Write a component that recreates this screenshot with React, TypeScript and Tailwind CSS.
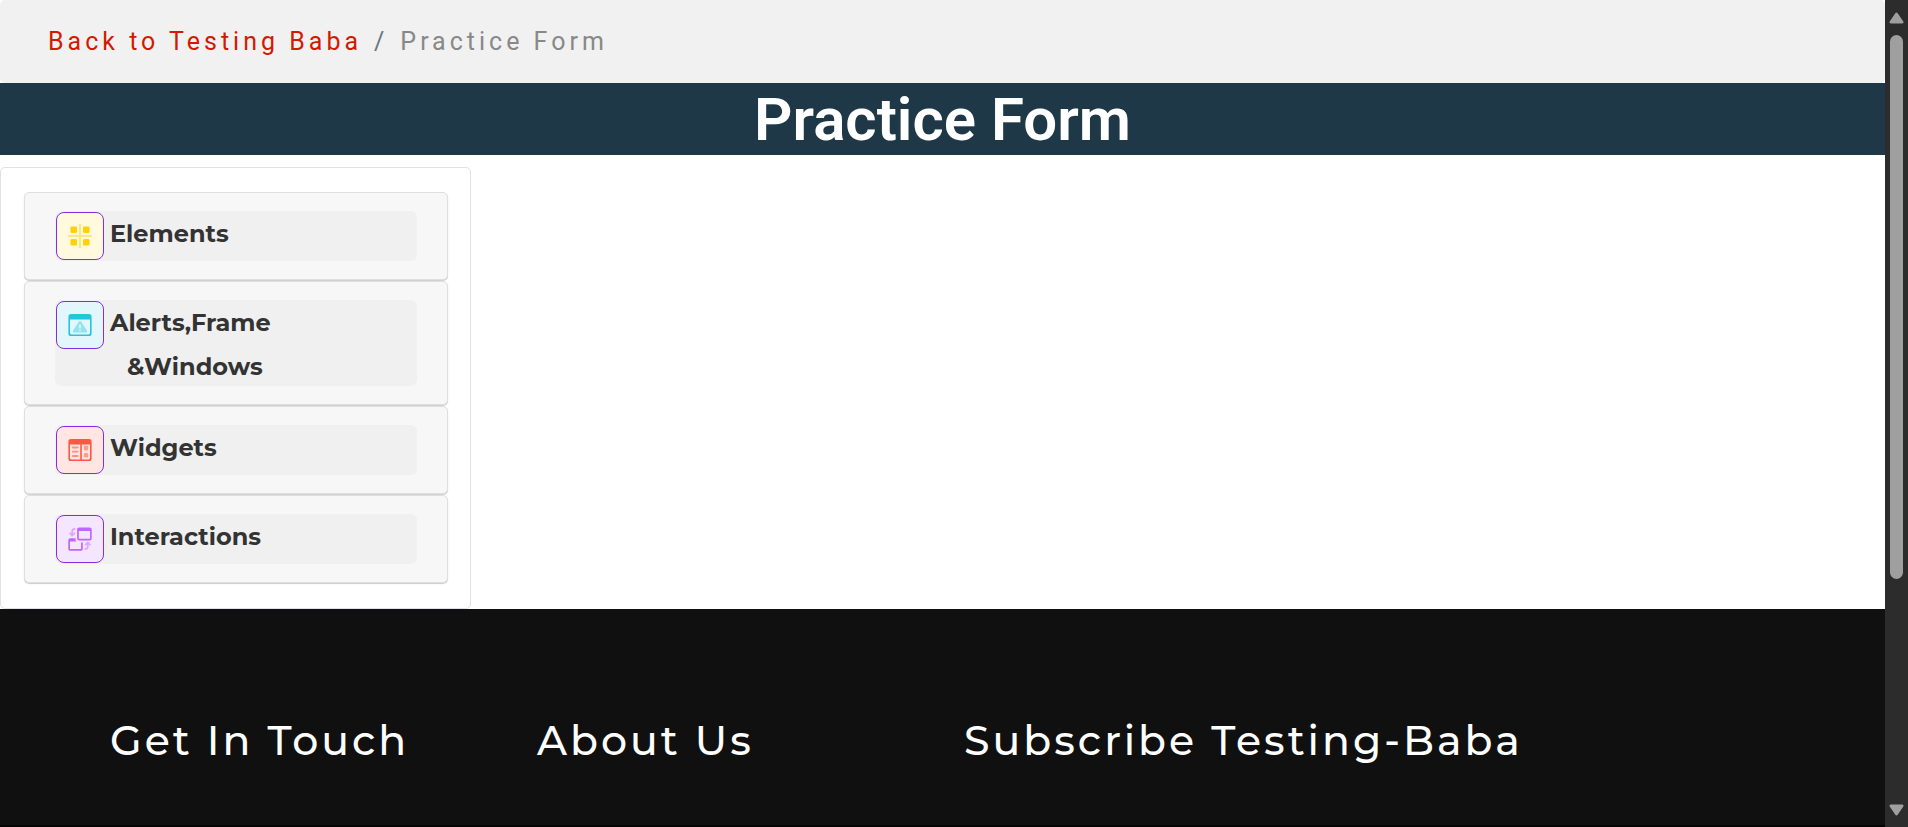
import type { ReactNode } from "react";

const ElementsIcon = () => (
  <svg viewBox="0 0 24 24" className="size-6" aria-hidden="true">
    <path d="M12 0.8v22.6M0.8 12h22.6" stroke="#ffe680" strokeWidth="2" strokeLinecap="round" />
    <g fill="#ffd205">
      <rect x="2.4" y="2.4" width="6.6" height="6.6" rx="1.4" />
      <rect x="15" y="2.4" width="6.6" height="6.6" rx="1.4" />
      <rect x="2.4" y="15" width="6.6" height="6.6" rx="1.4" />
      <rect x="15" y="15" width="6.6" height="6.6" rx="1.4" />
    </g>
  </svg>
);

const AlertsIcon = () => (
  <svg viewBox="0 0 24 24" className="size-6" aria-hidden="true">
    <path
      fill="#26c6da"
      fillRule="evenodd"
      d="M3 1h18a2.6 2.6 0 0 1 2.6 2.6v16.8A2.6 2.6 0 0 1 21 23H3a2.6 2.6 0 0 1-2.6-2.6V3.6A2.6 2.6 0 0 1 3 1ZM2 6.4v13.6A1.4 1.4 0 0 0 3.4 21.4h17.2a1.4 1.4 0 0 0 1.4-1.4V6.4Z"
    />
    <path
      fill="#93e3ee"
      fillRule="evenodd"
      d="M10.9 8.6a1.3 1.3 0 0 1 2.2 0l5.8 9a1.3 1.3 0 0 1-1.1 2H6.2a1.3 1.3 0 0 1-1.1-2ZM11.2 11.5v4h1.6v-4ZM11.2 16.7v1.6h1.6v-1.6Z"
    />
  </svg>
);

const WidgetsIcon = () => (
  <svg viewBox="0 0 24 24" className="size-6" aria-hidden="true">
    <path
      fill="#ff5740"
      fillRule="evenodd"
      d="M3 1h18a2.6 2.6 0 0 1 2.6 2.6v16.8A2.6 2.6 0 0 1 21 23H3a2.6 2.6 0 0 1-2.6-2.6V3.6A2.6 2.6 0 0 1 3 1ZM2 6.4v13.6A1.4 1.4 0 0 0 3.4 21.4h8.8v-15ZM13.8 6.4v15h6.8a1.4 1.4 0 0 0 1.4-1.4V6.4Z"
    />
    <path d="M4.8 9.5h4.8M4.8 13.7h4.8M4.8 18h4.8" stroke="#ff8f80" strokeWidth="1.8" strokeLinecap="round" />
    <rect x="15.8" y="7.8" width="4.4" height="4.6" rx="1" fill="#ff9b8d" />
    <rect x="15.8" y="15" width="4.4" height="4.6" rx="1" fill="#ff9b8d" />
  </svg>
);

const InteractionsIcon = () => (
  <svg viewBox="0 0 24 24" className="size-6" aria-hidden="true">
    <path
      fill="#c065ff"
      fillRule="evenodd"
      d="M11 0.4h10.8a1.9 1.9 0 0 1 1.9 1.9v9.2a1.9 1.9 0 0 1-1.9 1.9H11a1.9 1.9 0 0 1-1.9-1.9V2.3A1.9 1.9 0 0 1 11 0.4ZM10.8 4v7.7H22V4Z"
    />
    <path
      fill="#c065ff"
      fillRule="evenodd"
      d="M2.2 11.2h5.4v1.6a2 2 0 0 0 1 1.8H2v7.4h11.1v-6.4h1.7v6.3a1.9 1.9 0 0 1-1.9 1.9H2.2a1.9 1.9 0 0 1-1.9-1.9v-8.8a1.9 1.9 0 0 1 1.9-1.9Z"
    />
    <path
      d="M6.6 2C4.9 2 4.2 3 4.2 4.5v3.7M2 6.3l2.2 2.2 2.2-2.2M17.4 22c1.7 0 2.4-1 2.4-2.5v-3.7M17.6 17.7l2.2-2.2 2.2 2.2"
      fill="none"
      stroke="#dda9ff"
      strokeWidth="1.8"
      strokeLinecap="round"
      strokeLinejoin="round"
    />
  </svg>
);

interface MenuEntry {
  label: ReactNode;
  icon: ReactNode;
  tile: string;
}

const menu: MenuEntry[] = [
  { label: "Elements", icon: <ElementsIcon />, tile: "bg-[#fff9de]" },
  {
    label: (
      <>
        Alerts,Frame
        <span className="block pl-[17px]">&amp;Windows</span>
      </>
    ),
    icon: <AlertsIcon />,
    tile: "bg-[#e2f7fb]",
  },
  { label: "Widgets", icon: <WidgetsIcon />, tile: "bg-[#ffe6e2]" },
  { label: "Interactions", icon: <InteractionsIcon />, tile: "bg-[#f5e6ff]" },
];

function MenuCard({ label, icon, tile }: MenuEntry) {
  return (
    <li className="rounded-[5px] border border-[#dfdfdf] bg-[#f7f7f7] px-[30px] py-[18px] shadow-[0_1px_1px_rgba(0,0,0,0.2)]">
      <button
        type="button"
        className="flex min-h-[50px] w-full items-start gap-1.5 rounded-md bg-[#f0f0f0] pt-px pl-px text-left"
      >
        <span
          className={`flex size-12 shrink-0 items-center justify-center rounded-lg border border-[#8a2be2] ${tile}`}
        >
          {icon}
        </span>
        <span className="-mb-[3px] font-[Montserrat,Inter,sans-serif] text-2xl leading-11 font-bold text-[#333]">
          {label}
        </span>
      </button>
    </li>
  );
}

function ScrollRail() {
  return (
    <div className="flex w-[23px] shrink-0 flex-col items-center bg-[#2c2c2c] pt-3 pb-[11px]" aria-hidden="true">
      <svg viewBox="0 0 15 12" className="h-3 w-[15px]">
        <path d="M6.3 1.2a1.5 1.5 0 0 1 2.4 0l5.6 8.2a1.4 1.4 0 0 1-1.2 2.2H1.9a1.4 1.4 0 0 1-1.2-2.2Z" fill="#9f9f9f" />
      </svg>
      <div className="mt-[11px] w-[13px] grow-[544] rounded-full bg-[#9f9f9f]" />
      <div className="grow-[225]" />
      <svg viewBox="0 0 15 12" className="h-3 w-[15px]">
        <path d="M6.3 10.8a1.5 1.5 0 0 0 2.4 0l5.6-8.2A1.4 1.4 0 0 0 13.1 0.4H1.9A1.4 1.4 0 0 0 0.7 2.6Z" fill="#9f9f9f" />
      </svg>
    </div>
  );
}

export default function App() {
  return (
    <div className="flex min-h-screen bg-white font-[Roboto,sans-serif]">
      <div className="flex min-w-0 flex-1 flex-col">
        <nav aria-label="Breadcrumb" className="rounded-[5px] bg-[#f1f1f1] px-12 py-6">
          <ol className="flex text-[25px] leading-[35px] tracking-[4px] text-[#888]">
            <li>
              <a href="#" className="text-[#d11a00]">
                Back to Testing Baba
              </a>
            </li>
            <li className="pl-3 before:pr-3 before:text-[#6c757d] before:content-['/']">Practice Form</li>
          </ol>
        </nav>
        <h1 className="bg-[#1e3847] pt-0.5 text-center text-6xl leading-[70px] font-semibold text-white">
          Practice Form
        </h1>

        <main className="pt-3">
          <aside className="w-1/4 rounded-[5px] border border-[#dee2e6] pt-6 pr-[22px] pb-[25px] pl-[23px]">
            <ul className="flex flex-col gap-px">
              {menu.map((entry, i) => (
                <MenuCard key={i} {...entry} />
              ))}
            </ul>
          </aside>
        </main>

        <footer className="flex-1 border-b-2 border-[#060606] bg-[#101010] pt-[106px] pr-[67px] pl-[110px] font-[Montserrat,Inter,sans-serif] text-[41px] leading-[50px] font-medium tracking-[3px] text-white">
          <div className="grid grid-cols-4">
            <h2>Get In Touch</h2>
            <h2>About Us</h2>
            <h2 className="col-span-2">Subscribe Testing-Baba</h2>
          </div>
        </footer>
      </div>
      <ScrollRail />
    </div>
  );
}
